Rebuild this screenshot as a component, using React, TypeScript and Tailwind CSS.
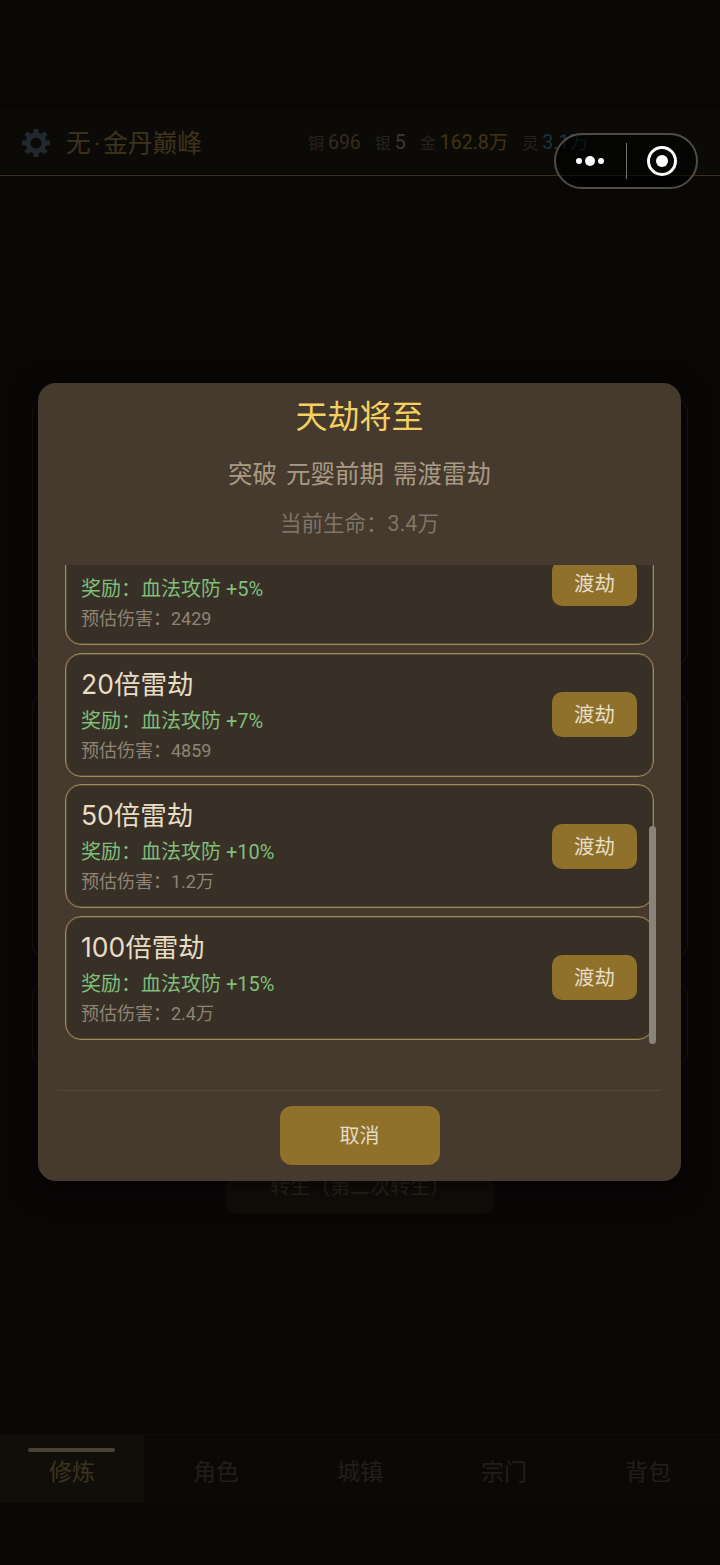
const FONT = 'font-[Roboto,"Noto_Sans_CJK_SC",sans-serif]';

const TRIALS = [
  { name: '10倍雷劫', bonus: '+5%', damage: '2429' },
  { name: '20倍雷劫', bonus: '+7%', damage: '4859' },
  { name: '50倍雷劫', bonus: '+10%', damage: '1.2万' },
  { name: '100倍雷劫', bonus: '+15%', damage: '2.4万' },
];

const CURRENCIES = [
  { label: '铜', value: '696', color: 'text-[#b08d5a]' },
  { label: '银', value: '5', color: 'text-[#c0b8a8]' },
  { label: '金', value: '162.8万', color: 'text-[#d4af37]' },
  { label: '灵', value: '3.1万', color: 'text-[#5aa8d8]' },
];

const TABS = ['修炼', '角色', '城镇', '宗门', '背包'];

function Gear() {
  return (
    <svg viewBox="0 0 30 30" className="w-[30px] h-[30px] text-[#74869f]" fill="currentColor">
      <circle cx="15" cy="15" r="8" fill="none" stroke="currentColor" strokeWidth="5" />
      {[0, 45, 90, 135, 180, 225, 270, 315].map((deg) => (
        <rect key={deg} x="12.6" y="1" width="4.8" height="5" transform={`rotate(${deg} 15 15)`} />
      ))}
    </svg>
  );
}

function TrialRow({ name, bonus, damage }: { name: string; bonus: string; damage: string }) {
  return (
    <div className="h-[124px] shrink-0 flex items-center justify-between pl-[15px] pr-[16px] rounded-[16px] bg-[#382f27] border border-[#a08a58] shadow-[inset_0_0_0_1px_rgba(140,120,79,0.4)]">
      <div className="flex flex-col">
        <span className='text-[26.5px] leading-[39px] text-[#e8dcc4] font-[Inter,"Noto_Sans_CJK_SC",sans-serif]'>{name}</span>
        <span className="pt-[2px] text-[20px] leading-[30px] text-[#7fbf7a]">奖励：血法攻防 {bonus}</span>
        <span className="text-[18px] leading-[29px] text-[#8f8474]">预估伤害：{damage}</span>
      </div>
      <button className="w-[85px] h-[45px] pt-[2px] rounded-[10px] bg-[#8f712c] text-[20.5px] text-[#e8dcc4]">渡劫</button>
    </div>
  );
}

export default function App() {
  return (
    <div className={`relative h-[1565px] w-[720px] overflow-hidden bg-[#1f1a14] ${FONT}`}>
      <div className="h-[110px]" />
      <header className="h-[66px] flex items-center pl-[21px] bg-[#2a231a] border-b border-[#c9a050]">
        <Gear />
        <span className="ml-[15px] pt-[2px] text-[24.7px] text-[#c9a961]">
          无<span className="mx-[3px]">·</span>金丹巅峰
        </span>
        <div className="ml-[106px] flex items-baseline gap-[14px]">
          {CURRENCIES.map((c) => (
            <span key={c.label} className="flex items-baseline gap-[4px]">
              <span className="text-[16px] text-[#7d7466]">{c.label}</span>
              <span className={`text-[19.5px] ${c.color}`}>{c.value}</span>
            </span>
          ))}
        </div>
      </header>

      <div className="mt-[222px] mx-[32px] flex flex-col">
        <div className="h-[269px] rounded-[16px] border border-[#5a4d3a]" />
        <div className="mt-[25px] h-[268px] rounded-[16px] border border-[#5a4d3a]" />
        <div className="mt-[22px] h-[84px] rounded-[16px] border border-[#5a4d3a]" />
      </div>
      <div className="mt-[103px] mx-auto w-[268px] h-[44px] rounded-[10px] bg-[#3a3024] text-center text-[20px] leading-[36px] text-[#8a7a5c]">
        转生（第二次转生）
      </div>

      <nav className="absolute top-[1434px] left-0 right-0 h-[69px] flex bg-[#241e16] border-t border-[#33291d]">
        {TABS.map((tab, i) => (
          <div
            key={tab}
            className={`relative flex-1 flex items-center justify-center text-[23px] ${
              i === 0 ? 'bg-[#3a3022] text-[#c9a961]' : 'text-[#6f6555]'
            }`}
          >
            {i === 0 && <div className="absolute top-[13px] left-[28px] right-[29px] h-[4px] rounded-full bg-[#f5dcae]" />}
            <span className="mt-[8px]">{tab}</span>
          </div>
        ))}
      </nav>

      {/* dim layer + dialog */}
      <div className="absolute inset-0 bg-black/70 flex items-center justify-center pr-px pb-px">
        <div className="w-[643px] h-[798px] rounded-[18px] bg-[#453a2d] flex flex-col shadow-[0_8px_24px_rgba(0,0,0,0.5)]">
          <div className="h-[182px] shrink-0 flex flex-col items-center">
            <h2 className="mt-[12px] text-[32px] leading-[44px] text-[#f5d060]">天劫将至</h2>
            <p className="mt-[18px] text-[24.5px] leading-[36px] text-[#a89a85] [word-spacing:3px]">突破 元婴前期 需渡雷劫</p>
            <p className="mt-[15px] text-[21.5px] leading-[32px] text-[#7f7566]">当前生命：3.4万</p>
          </div>
          <div className="relative h-[484px] shrink-0 overflow-hidden">
            <div className="-mt-[44px] ml-[27px] mr-[27px] flex flex-col gap-[7.5px]">
              {TRIALS.map((t) => (
                <TrialRow key={t.name} {...t} />
              ))}
            </div>
            <div className="absolute top-[261px] right-[25px] w-[7px] h-[218px] rounded-full bg-[#8a8378]" />
          </div>
          <div className="mx-[20px] mt-[41px] pt-[15px] border-t border-[#52473a] flex justify-center">
            <button className="w-[160px] h-[59px] rounded-[12px] bg-[#8f712c] text-[20px] text-[#e8dcc4]">取消</button>
          </div>
        </div>
      </div>

      {/* mini-program capsule */}
      <div className="absolute top-[133px] left-[554px] w-[144px] h-[56px] rounded-full bg-black/60 border-[2px] border-[#4f4c47] flex items-center">
        <div className="w-[70px] pr-[2px] flex items-center justify-center gap-[3px]">
          <span className="w-[6px] h-[6px] rounded-full bg-white" />
          <span className="w-[10px] h-[10px] rounded-full bg-white" />
          <span className="w-[6px] h-[6px] rounded-full bg-white" />
        </div>
        <div className="w-px h-[36px] bg-[#77736c]" />
        <div className="flex-1 pl-[1px] flex items-center justify-center">
          <span className="w-[30px] h-[30px] rounded-full border-[3px] border-white flex items-center justify-center">
            <span className="w-[12px] h-[12px] rounded-full bg-white" />
          </span>
        </div>
      </div>
    </div>
  );
}
